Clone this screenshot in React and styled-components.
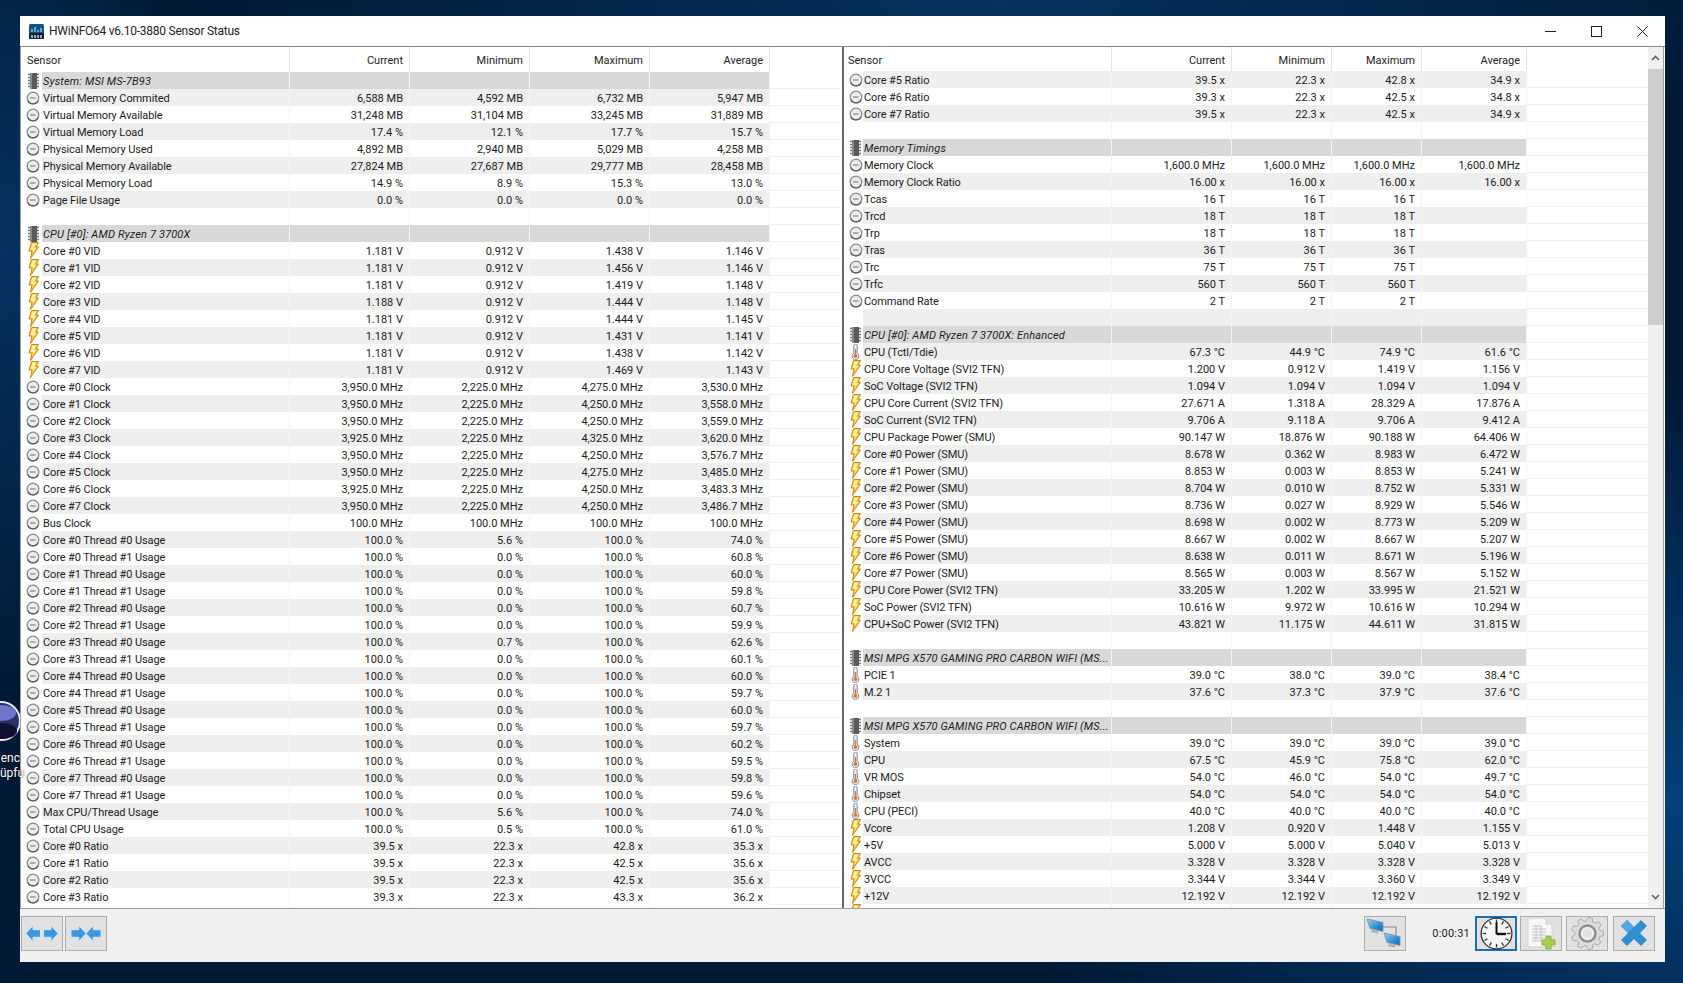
import styled, { createGlobalStyle } from 'styled-components'

const GlobalStyle = createGlobalStyle`
  html, body {
    margin: 0;
    padding: 0;
    height: 100%;
    overflow: hidden;
  }
`

const LEFT_COLS = '21px 248px 120px 120px 120px 120px 1fr'
const RIGHT_COLS = '19px 249px 120px 100px 90px 105px 1fr'

const Desktop = styled.div`
  position: relative;
  box-sizing: border-box;
  width: 1683px;
  height: 983px;
  padding: 16px 18px 21px 20px;
  background:
    radial-gradient(ellipse 700px 420px at 1683px 800px, #05407a 0%, rgba(5, 64, 122, 0) 100%),
    radial-gradient(ellipse 800px 200px at 1000px 0px, #04335f 0%, rgba(4, 51, 95, 0) 100%),
    radial-gradient(ellipse 200px 450px at 0px 250px, #04335f 0%, rgba(4, 51, 95, 0) 100%),
    #021a36;
`

const ShortcutIcon = styled.div`
  position: absolute;
  left: 0;
  top: 698px;
  width: 20px;
  color: white;
  font-family: Roboto, sans-serif;
  font-size: 12px;
  line-height: 15px;
  text-shadow: 0 0 2px black;
  text-align: right;
`

const ShortcutPicture = styled.svg`
  display: block;
  margin-bottom: 7px;
`

const Window = styled.div`
  display: flex;
  flex-direction: column;
  height: 946px;
  background-color: #f0f0f0;
  font-family: Roboto, sans-serif;
  color: #1c1c1c;
`

const TitleBar = styled.div`
  display: flex;
  align-items: center;
  flex: none;
  height: 30px;
  background-color: white;
  padding-left: 9px;
`

const Title = styled.div`
  margin-left: 5px;
  font-size: 12px;
  letter-spacing: -0.25px;
  color: #222;
  flex: 1;
`

const WindowButton = styled.div`
  display: flex;
  align-items: center;
  justify-content: center;
  width: 46px;
  height: 30px;
`

const Panels = styled.div`
  display: flex;
  flex: none;
  height: 861px;
  background-color: white;
  border-top: 1px solid #888;
  border-bottom: 1px solid #a0a0a0;
  box-sizing: content-box;
`

const LeftPanel = styled.div`
  width: 821px;
  flex: none;
  border-left: 1px solid #a0a0a0;
  overflow: hidden;
`

const RightPanel = styled.div`
  display: flex;
  flex: 1;
  border-left: 2px solid #666;
  border-right: 1px solid #a0a0a0;
  margin-right: 1px;
  overflow: hidden;
`

const RightRows = styled.div`
  flex: 1;
  overflow: hidden;
`

const HeaderRow = styled.div`
  display: grid;
  grid-template-columns: ${(p) => p.$cols};
  height: ${(p) => p.$height}px;
  font-size: 11px;
  color: #222;
`

const HeaderCell = styled.div`
  display: flex;
  align-items: center;
  justify-content: ${(p) => (p.$name ? 'flex-start' : 'flex-end')};
  grid-column: ${(p) => (p.$name ? 'span 2' : 'auto')};
  padding: 2px 6px 0 ${(p) => (p.$name ? p.$inset : 6)}px;
  border-right: 1px solid #e4e4e4;
`

const HeaderFiller = styled.div``

const Row = styled.div`
  display: grid;
  grid-template-columns: ${(p) => p.$cols};
  height: 17px;
  font-size: 11px;
  line-height: 20px;
  box-sizing: border-box;
  border-bottom: 1px solid #f0f0f0;
`

const IconCell = styled.div`
  display: flex;
  align-items: center;
  justify-content: center;
  box-sizing: border-box;
  height: 17px;
  padding-left: ${(p) => p.$inset}px;
  background-color: white;
`

const rowColor = (p) => {
  if (p.$section) return '#d8d8d8'
  return p.$stripe ? '#eeeeee' : 'white'
}

const NameCell = styled.div`
  height: 17px;
  padding-left: 1px;
  white-space: nowrap;
  overflow: hidden;
  background-color: ${rowColor};
  border-right: 1px solid #f3f3f3;
  font-style: ${(p) => (p.$section ? 'italic' : 'normal')};
  letter-spacing: ${(p) => (p.$section ? '0.15px' : '-0.1px')};
`

const ValueCell = styled.div`
  height: 17px;
  padding-right: 6px;
  text-align: right;
  white-space: nowrap;
  overflow: hidden;
  background-color: ${rowColor};
  border-right: 1px solid #f3f3f3;
`

const Filler = styled.div``

const ScrollBar = styled.div`
  display: flex;
  flex-direction: column;
  flex: none;
  width: 15px;
  background-color: #f0f0f0;
`

const ScrollArrow = styled.div`
  display: flex;
  align-items: center;
  justify-content: center;
  flex: none;
  height: 22px;
`

const ScrollThumb = styled.div`
  flex: none;
  height: 256px;
  background-color: #cdcdcd;
`

const ScrollTrack = styled.div`
  flex: 1;
`

const BottomBar = styled.div`
  display: flex;
  align-items: center;
  flex: 1;
  padding: 0 10px 5px 1px;
`

const ToolButton = styled.div`
  display: flex;
  align-items: center;
  justify-content: center;
  box-sizing: border-box;
  flex: none;
  width: 42px;
  height: 35px;
  margin-left: ${(p) => p.$gap || 0}px;
  background-color: #e1e1e1;
  border: ${(p) => (p.$active ? '2px solid #1a6eb4' : '1px solid #adadad')};
`

const Spacer = styled.div`
  flex: 1;
`

const Timer = styled.div`
  width: 69px;
  padding-right: 5px;
  box-sizing: border-box;
  text-align: right;
  font-size: 11px;
  letter-spacing: 0.2px;
  color: #222;
`

const ClockIcon = () => (
  <svg width="14" height="14" viewBox="0 0 14 14">
    <circle cx="7" cy="7" r="5.800" fill="#ececec" stroke="#8a8a8a" strokeWidth="1.300" />
    <path d="M1.800 9.600a5.800 5.800 0 0 0 10.400 0" fill="none" stroke="#5c5c5c" strokeWidth="1.300" />
    <path d="M4 7h5.500" stroke="#707070" strokeWidth="1" />
  </svg>
)

const BoltIcon = () => (
  <svg width="11" height="17" viewBox="0 0 11 17">
    <path d="M3.500.5h7L8 5h2.500L2.500 16.500l1.500-7.500H1z" fill="#ffc93a" stroke="#c9861a" strokeWidth="1" />
    <path d="M4.400 1.600h3.800L6 6h2L4.500 11l.8-3H2.600z" fill="#fff2a8" />
  </svg>
)

const ThermoIcon = () => (
  <svg width="9" height="16" viewBox="0 0 9 16">
    <path d="M2.800 1.800a1.700 1.700 0 0 1 3.400 0v7.400a3.400 3.400 0 1 1-3.400 0z" fill="#f2f2f2" stroke="#7a8aa8" strokeWidth="1" />
    <path d="M4.500 5v6" stroke="#e0782a" strokeWidth="1.400" />
    <circle cx="4.500" cy="12" r="2" fill="#e0782a" />
  </svg>
)

const ChipIcon = () => (
  <svg width="11" height="16" viewBox="0 0 11 16">
    <rect x="2" y="0" width="7" height="16" fill="#5a5a5a" />
    <rect x="2" y="0" width="2" height="16" fill="#8a8a8a" />
    <path d="M0 1.500h2M0 4.500h2M0 7.500h2M0 10.500h2M0 13.500h2M9 1.500h2M9 4.500h2M9 7.500h2M9 10.500h2M9 13.500h2" stroke="#777" strokeWidth="1.400" />
  </svg>
)

const AppIcon = () => (
  <svg width="15" height="15" viewBox="0 0 15 15">
    <rect width="15" height="15" rx="1.500" fill="#17527f" />
    <rect y="9" width="15" height="6" rx="1" fill="#0d2438" />
    <path d="M3 5v3M6 3v5M9 6v2M12 4v4" stroke="#6cc0f0" strokeWidth="1.600" />
    <path d="M3 11v3M6 11v3M9 11v3M12 11v3" stroke="white" strokeWidth="1.200" />
  </svg>
)

const SpreadIcon = () => (
  <svg width="34" height="19" viewBox="0 0 34 19">
    <path d="M.8 9.500L8 1.500v4.200h7.500v7.600H8v4.200z" fill="#3c96e2" stroke="#d4e6f6" />
    <path d="M33.200 9.500L26 1.500v4.200h-7.500v7.600H26v4.200z" fill="#3c96e2" stroke="#d4e6f6" />
  </svg>
)

const CollapseIcon = () => (
  <svg width="32" height="19" viewBox="0 0 32 19">
    <path d="M16 9.500L8.800 1.500v4.200H1v7.600h7.800v4.200z" fill="#3c96e2" stroke="#d4e6f6" />
    <path d="M16 9.500l7.200-8v4.200H31v7.600h-7.800v4.200z" fill="#3c96e2" stroke="#d4e6f6" />
  </svg>
)

const Monitor = ({ x, y, id }) => (
  <g transform={`translate(${x} ${y})`}>
    <path d="M1 1l16 3.500v9L4 10.500z" fill={`url(#${id})`} stroke="#8a98a4" />
    <path d="M6.500 11.500l6 1.300-.5 2.700-7.500-1.500z" fill="#b0b0b0" />
  </g>
)

const NetworkIcon = () => (
  <svg width="38" height="33" viewBox="0 0 38 33">
    <defs>
      <linearGradient id="screenTop" x1="0" y1="0" x2="1" y2="1">
        <stop offset="0" stopColor="#9ad6f7" />
        <stop offset="0.6" stopColor="#2b8fd8" />
        <stop offset="1" stopColor="#1668a8" />
      </linearGradient>
      <linearGradient id="screenBottom" x1="0" y1="0" x2="1" y2="1">
        <stop offset="0" stopColor="#9ad6f7" />
        <stop offset="0.6" stopColor="#2b8fd8" />
        <stop offset="1" stopColor="#1668a8" />
      </linearGradient>
    </defs>
    <path d="M16 10h14v8" fill="none" stroke="#8a8a8a" strokeWidth="1.200" />
    <Monitor x={0} y={1} id="screenTop" />
    <Monitor x={17} y={15} id="screenBottom" />
  </svg>
)

const BigClockIcon = () => {
  const ticks = Array.from({ length: 12 }, (_, i) => i * 30)
  return (
    <svg width="33" height="33" viewBox="0 0 33 33">
      <circle cx="16.500" cy="16.500" r="15.400" fill="#f6f6f6" stroke="#333" strokeWidth="1.300" />
      {ticks.map((a) => (
        <path key={a} d="M16.500 2.500v3.600" stroke="#333" strokeWidth="1.300" transform={`rotate(${a} 16.500 16.500)`} />
      ))}
      <path d="M16.500 17V5.500" stroke="#111" strokeWidth="2" />
      <path d="M16.500 17H26" stroke="#111" strokeWidth="2.400" />
    </svg>
  )
}

const SheetIcon = () => (
  <svg width="34" height="33" viewBox="0 0 34 33">
    <path d="M4 1h17l7 7v22H4z" fill="#f7f7f7" stroke="#d4d4d4" />
    <path d="M21 1v7h7z" fill="#dcdcdc" />
    <path d="M8 9h10M8 12h14M8 15h14M8 18h14M8 21h14M8 24h10M12 9v15M17 9v15" stroke="#c2c2c2" strokeWidth="1" />
    <path d="M22 19h5v4h4v5h-4v4h-5v-4h-4v-5h4z" fill="#a4cf4a" stroke="#8ab03a" />
  </svg>
)

// gear outline, worked out from the tooth count
const gearPath = () => {
  const teeth = 9
  const step = (2 * Math.PI) / teeth
  const at = (r, t) => `${(16.5 + r * Math.cos(t)).toFixed(1)} ${(16.5 + r * Math.sin(t)).toFixed(1)}`
  const points = []
  for (let i = 0; i < teeth; i++) {
    const a = i * step
    points.push(at(12.5, a - step * 0.36), at(16, a - step * 0.2), at(16, a + step * 0.2), at(12.5, a + step * 0.36))
  }
  return `M${points.join('L')}z`
}

const GearIcon = () => (
  <svg width="33" height="33" viewBox="0 0 33 33">
    <path d={gearPath()} fill="#dcdcdc" stroke="#ababab" strokeLinejoin="round" />
    <circle cx="16.500" cy="16.500" r="8" fill="#efefef" stroke="#8e8e8e" strokeWidth="2.500" />
    <circle cx="16.500" cy="16.500" r="4.500" fill="#e2e2e2" />
  </svg>
)

const CloseIcon = () => (
  <svg width="26" height="26" viewBox="0 0 26 26">
    <path d="M6 0l7 7 7-7 6 6-7 7 7 7-6 6-7-7-7 7-6-6 7-7-7-7z" fill="#2f8fd0" />
    <path d="M6 0l7 7-6 6-7-7z" fill="#4fa8e2" />
  </svg>
)

const ChevronUp = () => (
  <svg width="9" height="6" viewBox="0 0 9 6">
    <path d="M1 5l3.500-3.500L8 5" fill="none" stroke="#606060" strokeWidth="1.600" />
  </svg>
)

const ChevronDown = () => (
  <svg width="9" height="6" viewBox="0 0 9 6">
    <path d="M1 1l3.500 3.500L8 1" fill="none" stroke="#606060" strokeWidth="1.600" />
  </svg>
)

const icons = { c: ClockIcon, b: BoltIcon, t: ThermoIcon }

const section = (name) => ({ section: true, name })
const blank = { name: '', values: ['', '', '', ''] }
const row = (icon, name, unit, values) => ({
  icon,
  name,
  values: values.map((v) => (v === '' ? '' : `${v} ${unit}`)),
})

const clocks = [
  ['3,950.0', '2,225.0', '4,275.0', '3,530.0'],
  ['3,950.0', '2,225.0', '4,250.0', '3,558.0'],
  ['3,950.0', '2,225.0', '4,250.0', '3,559.0'],
  ['3,925.0', '2,225.0', '4,325.0', '3,620.0'],
  ['3,950.0', '2,225.0', '4,250.0', '3,576.7'],
  ['3,950.0', '2,225.0', '4,275.0', '3,485.0'],
  ['3,925.0', '2,225.0', '4,250.0', '3,483.3'],
  ['3,950.0', '2,225.0', '4,250.0', '3,486.7'],
]

const vids = [
  ['1.181', '1.438', '1.146'],
  ['1.181', '1.456', '1.146'],
  ['1.181', '1.419', '1.148'],
  ['1.188', '1.444', '1.148'],
  ['1.181', '1.444', '1.145'],
  ['1.181', '1.431', '1.141'],
  ['1.181', '1.438', '1.142'],
  ['1.181', '1.469', '1.143'],
]

const threads = [
  ['5.6', '74.0'], ['0.0', '60.8'], ['0.0', '60.0'], ['0.0', '59.8'],
  ['0.0', '60.7'], ['0.0', '59.9'], ['0.7', '62.6'], ['0.0', '60.1'],
  ['0.0', '60.0'], ['0.0', '59.7'], ['0.0', '60.0'], ['0.0', '59.7'],
  ['0.0', '60.2'], ['0.0', '59.5'], ['0.0', '59.8'], ['0.0', '59.6'],
]

const smu = [
  ['8.678', '0.362', '8.983', '6.472'],
  ['8.853', '0.003', '8.853', '5.241'],
  ['8.704', '0.010', '8.752', '5.331'],
  ['8.736', '0.027', '8.929', '5.546'],
  ['8.698', '0.002', '8.773', '5.209'],
  ['8.667', '0.002', '8.667', '5.207'],
  ['8.638', '0.011', '8.671', '5.196'],
  ['8.565', '0.003', '8.567', '5.152'],
]

const leftRows = [
  section('System: MSI MS-7B93'),
  row('c', 'Virtual Memory Commited', 'MB', ['6,588', '4,592', '6,732', '5,947']),
  row('c', 'Virtual Memory Available', 'MB', ['31,248', '31,104', '33,245', '31,889']),
  row('c', 'Virtual Memory Load', '%', ['17.4', '12.1', '17.7', '15.7']),
  row('c', 'Physical Memory Used', 'MB', ['4,892', '2,940', '5,029', '4,258']),
  row('c', 'Physical Memory Available', 'MB', ['27,824', '27,687', '29,777', '28,458']),
  row('c', 'Physical Memory Load', '%', ['14.9', '8.9', '15.3', '13.0']),
  row('c', 'Page File Usage', '%', ['0.0', '0.0', '0.0', '0.0']),
  blank,
  section('CPU [#0]: AMD Ryzen 7 3700X'),
  ...vids.map((v, i) => row('b', `Core #${i} VID`, 'V', [v[0], '0.912', v[1], v[2]])),
  ...clocks.map((v, i) => row('c', `Core #${i} Clock`, 'MHz', v)),
  row('c', 'Bus Clock', 'MHz', ['100.0', '100.0', '100.0', '100.0']),
  ...threads.map((v, i) =>
    row('c', `Core #${Math.floor(i / 2)} Thread #${i % 2} Usage`, '%', ['100.0', v[0], '100.0', v[1]]),
  ),
  row('c', 'Max CPU/Thread Usage', '%', ['100.0', '5.6', '100.0', '74.0']),
  row('c', 'Total CPU Usage', '%', ['100.0', '0.5', '100.0', '61.0']),
  row('c', 'Core #0 Ratio', 'x', ['39.5', '22.3', '42.8', '35.3']),
  row('c', 'Core #1 Ratio', 'x', ['39.5', '22.3', '42.5', '35.6']),
  row('c', 'Core #2 Ratio', 'x', ['39.5', '22.3', '42.5', '35.6']),
  row('c', 'Core #3 Ratio', 'x', ['39.3', '22.3', '43.3', '36.2']),
]

const MSI = 'MSI MPG X570 GAMING PRO CARBON WIFI (MS...'

const rightRows = [
  row('c', 'Core #5 Ratio', 'x', ['39.5', '22.3', '42.8', '34.9']),
  row('c', 'Core #6 Ratio', 'x', ['39.3', '22.3', '42.5', '34.8']),
  row('c', 'Core #7 Ratio', 'x', ['39.5', '22.3', '42.5', '34.9']),
  blank,
  section('Memory Timings'),
  row('c', 'Memory Clock', 'MHz', ['1,600.0', '1,600.0', '1,600.0', '1,600.0']),
  row('c', 'Memory Clock Ratio', 'x', ['16.00', '16.00', '16.00', '16.00']),
  row('c', 'Tcas', 'T', ['16', '16', '16', '']),
  row('c', 'Trcd', 'T', ['18', '18', '18', '']),
  row('c', 'Trp', 'T', ['18', '18', '18', '']),
  row('c', 'Tras', 'T', ['36', '36', '36', '']),
  row('c', 'Trc', 'T', ['75', '75', '75', '']),
  row('c', 'Trfc', 'T', ['560', '560', '560', '']),
  row('c', 'Command Rate', 'T', ['2', '2', '2', '']),
  blank,
  section('CPU [#0]: AMD Ryzen 7 3700X: Enhanced'),
  row('t', 'CPU (Tctl/Tdie)', '°C', ['67.3', '44.9', '74.9', '61.6']),
  row('b', 'CPU Core Voltage (SVI2 TFN)', 'V', ['1.200', '0.912', '1.419', '1.156']),
  row('b', 'SoC Voltage (SVI2 TFN)', 'V', ['1.094', '1.094', '1.094', '1.094']),
  row('b', 'CPU Core Current (SVI2 TFN)', 'A', ['27.671', '1.318', '28.329', '17.876']),
  row('b', 'SoC Current (SVI2 TFN)', 'A', ['9.706', '9.118', '9.706', '9.412']),
  row('b', 'CPU Package Power (SMU)', 'W', ['90.147', '18.876', '90.188', '64.406']),
  ...smu.map((v, i) => row('b', `Core #${i} Power (SMU)`, 'W', v)),
  row('b', 'CPU Core Power (SVI2 TFN)', 'W', ['33.205', '1.202', '33.995', '21.521']),
  row('b', 'SoC Power (SVI2 TFN)', 'W', ['10.616', '9.972', '10.616', '10.294']),
  row('b', 'CPU+SoC Power (SVI2 TFN)', 'W', ['43.821', '11.175', '44.611', '31.815']),
  blank,
  section(MSI),
  row('t', 'PCIE 1', '°C', ['39.0', '38.0', '39.0', '38.4']),
  row('t', 'M.2 1', '°C', ['37.6', '37.3', '37.9', '37.6']),
  blank,
  section(MSI),
  row('t', 'System', '°C', ['39.0', '39.0', '39.0', '39.0']),
  row('t', 'CPU', '°C', ['67.5', '45.9', '75.8', '62.0']),
  row('t', 'VR MOS', '°C', ['54.0', '46.0', '54.0', '49.7']),
  row('t', 'Chipset', '°C', ['54.0', '54.0', '54.0', '54.0']),
  row('t', 'CPU (PECI)', '°C', ['40.0', '40.0', '40.0', '40.0']),
  row('b', 'Vcore', 'V', ['1.208', '0.920', '1.448', '1.155']),
  row('b', '+5V', 'V', ['5.000', '5.000', '5.040', '5.013']),
  row('b', 'AVCC', 'V', ['3.328', '3.328', '3.328', '3.328']),
  row('b', '3VCC', 'V', ['3.344', '3.344', '3.360', '3.349']),
  row('b', '+12V', 'V', ['12.192', '12.192', '12.192', '12.192']),
  { icon: 'b', name: '', values: ['', '', '', ''] },
]

const Header = ({ cols, height, inset }) => (
  <HeaderRow $cols={cols} $height={height}>
    <HeaderCell $name $inset={inset}>Sensor</HeaderCell>
    <HeaderCell>Current</HeaderCell>
    <HeaderCell>Minimum</HeaderCell>
    <HeaderCell>Maximum</HeaderCell>
    <HeaderCell>Average</HeaderCell>
    <HeaderFiller />
  </HeaderRow>
)

// stripes follow the row index, the right panel goes on where the left one stopped
const SensorRows = ({ rows, cols, stripeOn, inset }) =>
  rows.map((r, i) => {
    const Icon = r.section ? ChipIcon : icons[r.icon]
    const stripe = !r.section && i % 2 === stripeOn
    const values = r.values || ['', '', '', '']
    return (
      <Row key={i} $cols={cols}>
        <IconCell $inset={inset}>{Icon && <Icon />}</IconCell>
        <NameCell $section={r.section} $stripe={stripe}>{r.name}</NameCell>
        {values.map((v, j) => (
          <ValueCell key={j} $section={r.section} $stripe={stripe}>{v}</ValueCell>
        ))}
        <Filler />
      </Row>
    )
  })

const App = () => (
  <Desktop>
    <GlobalStyle />
    <ShortcutIcon>
      <ShortcutPicture width="20" height="46" viewBox="0 0 20 46">
        <circle cx="1" cy="23" r="19" fill="#2c2f6e" stroke="#e8e8f0" strokeWidth="2" />
        <ellipse cx="1" cy="15" rx="15" ry="8" fill="#6f78c8" />
        <ellipse cx="1" cy="33" rx="16" ry="8" fill="#101030" />
      </ShortcutPicture>
      <div>enc</div>
      <div>üpfu</div>
    </ShortcutIcon>
    <Window>
      <TitleBar>
        <AppIcon />
        <Title>HWiNFO64 v6.10-3880 Sensor Status</Title>
        <WindowButton>
          <svg width="11" height="11" viewBox="0 0 11 11"><path d="M0 5.500h11" stroke="#222" /></svg>
        </WindowButton>
        <WindowButton>
          <svg width="11" height="11" viewBox="0 0 11 11"><rect x=".5" y=".5" width="10" height="10" fill="none" stroke="#222" /></svg>
        </WindowButton>
        <WindowButton>
          <svg width="11" height="11" viewBox="0 0 11 11"><path d="M.5.500l10 10M10.500.500l-10 10" stroke="#222" /></svg>
        </WindowButton>
      </TitleBar>
      <Panels>
        <LeftPanel>
          <Header cols={LEFT_COLS} height={25} inset={6} />
          <SensorRows rows={leftRows} cols={LEFT_COLS} stripeOn={1} inset={3} />
        </LeftPanel>
        <RightPanel>
          <RightRows>
            <Header cols={RIGHT_COLS} height={24} inset={4} />
            <SensorRows rows={rightRows} cols={RIGHT_COLS} stripeOn={0} inset={4} />
          </RightRows>
          <ScrollBar>
            <ScrollArrow><ChevronUp /></ScrollArrow>
            <ScrollThumb />
            <ScrollTrack />
            <ScrollArrow><ChevronDown /></ScrollArrow>
          </ScrollBar>
        </RightPanel>
      </Panels>
      <BottomBar>
        <ToolButton><SpreadIcon /></ToolButton>
        <ToolButton $gap={2}><CollapseIcon /></ToolButton>
        <Spacer />
        <ToolButton><NetworkIcon /></ToolButton>
        <Timer>0:00:31</Timer>
        <ToolButton $active><BigClockIcon /></ToolButton>
        <ToolButton $gap={3}><SheetIcon /></ToolButton>
        <ToolButton $gap={4}><GearIcon /></ToolButton>
        <ToolButton $gap={5}><CloseIcon /></ToolButton>
      </BottomBar>
    </Window>
  </Desktop>
)

export default App
